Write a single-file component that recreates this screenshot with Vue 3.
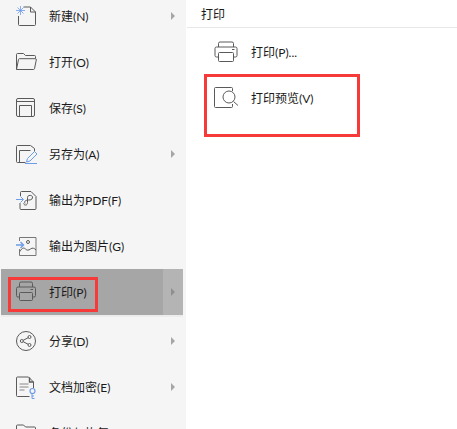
<template>
  <div class="page">
    <div class="side">
      <div class="list">
        <div class="row" v-for="item in menu" :key="item.label" :class="{ active: item.active }">
          <svg class="ico" width="30" height="30" viewBox="0 0 30 30" fill="none" stroke="#5a5a5a" stroke-width="1">
            <g v-if="item.icon == 'new'">
              <path d="M6.500 15v8.500a1 1 0 0 0 1 1h15a1 1 0 0 0 1-1V11l-5-5h-7" />
              <path d="M18.500 6v5h5" />
              <path d="M8.500 5v9M4 9.500h9M5.500 6.500l6 6M11.500 6.500l-6 6" stroke="#6d9ce8" stroke-width="0.8" />
            </g>
            <g v-else-if="item.icon == 'open'">
              <path d="M4.500 22.500v-15a1 1 0 0 1 1-1h6l2 2h9a1 1 0 0 1 1 1v2" />
              <path d="M4.500 22.500l2-10a1 1 0 0 1 1-.8h15.800a1 1 0 0 1 1 1.200l-1.800 8.800a1 1 0 0 1-1 .8z" />
            </g>
            <g v-else-if="item.icon == 'save'">
              <rect x="4.500" y="5.500" width="18" height="18" rx="1.500" />
              <path d="M4.500 8.500h18M7.500 23.500v-11h12v11" />
            </g>
            <g v-else-if="item.icon == 'saveas'">
              <path d="M13.500 23.500h-8a1 1 0 0 1-1-1v-15a1 1 0 0 1 1-1h13l4 3v3" />
              <path d="M7.500 23v-11.500h11" />
              <path d="M14.500 23l1-3.500 7-7 2.500 2.500-7 7zM13 24.500h12" stroke="#6d9ce8" />
            </g>
            <g v-else-if="item.icon == 'pdf'">
              <path d="M8.500 11V7.500a1 1 0 0 1 1-1h9.500l5 5v12a1 1 0 0 1-1 1h-14a1 1 0 0 1-1-1V18" />
              <path d="M13 18.500c-1.500-3 2-3.500 4-3.500 3 0 3.500-1.500 3.500-3 0-2-5-2.500-5 .5v5c0 3-3 3.500-4 1" />
              <path d="M4 14.500h7M8.500 11.500l3 3-3 3" stroke="#6d9ce8" />
            </g>
            <g v-else-if="item.icon == 'image'">
              <path d="M7.500 10V6.500h16.500v18H7.500V18" stroke="#777" />
              <circle cx="16" cy="11" r="1.500" />
              <path d="M8 20.500c2-4 4-4 5.500-2.500s3 1.500 5 0 3.500-1 5.500 1" />
              <path d="M4 14h7M8.500 11l3 3-3 3" stroke="#6d9ce8" stroke-width="1.400" />
            </g>
            <g v-else-if="item.icon == 'print'">
              <path d="M7.500 10V6.500a1.500 1.500 0 0 1 1.500-1.500h10a1.500 1.500 0 0 1 1.500 1.500V10" />
              <path d="M7.500 20H6A1.500 1.500 0 0 1 4.500 18.500v-7A1.500 1.500 0 0 1 6 10h16a1.500 1.500 0 0 1 1.500 1.500v7a1.500 1.500 0 0 1-1.500 1.500h-1.500" />
              <rect x="7.500" y="15.500" width="13" height="8" rx="1" />
              <path d="M18.500 12.500h2.500" />
            </g>
            <g v-else-if="item.icon == 'share'">
              <circle cx="14" cy="15" r="9.500" />
              <circle cx="9.800" cy="15" r="1.500" />
              <circle cx="17.500" cy="11" r="1.500" />
              <circle cx="17.500" cy="19" r="1.500" />
              <path d="M11.200 14.300l5-2.600M11.200 15.700l5 2.600" />
            </g>
            <g v-else-if="item.icon == 'lock'">
              <path d="M21.500 16v-6l-5-5h-11a1 1 0 0 0-1 1v17.500a1 1 0 0 0 1 1h12" />
              <path d="M17.500 5.500v4.500h4" stroke-width="1.400" />
              <path d="M7.500 12h9M7.500 15h9M7.500 18h5" stroke="#888" />
              <circle cx="20.500" cy="19" r="2.500" stroke="#6d9ce8" stroke-width="1.200" />
              <path d="M20 21.500v5h2.500M20 24h2" stroke="#6d9ce8" />
            </g>
            <g v-else>
              <path d="M4.500 25v-17a1 1 0 0 1 1-1h6l2 2h9a1 1 0 0 1 1 1v15" />
              <path d="M10 14l3-3" stroke="#6d9ce8" />
            </g>
          </svg>
          <span class="label">{{ item.label }}</span>
          <span v-if="item.arrow" class="more"><i class="arrow"></i></span>
          <div v-if="item.active" class="mark"></div>
        </div>
      </div>
    </div>
    <div class="main">
      <div class="title">打印</div>
      <div class="sub">
        <svg class="ico" width="30" height="30" viewBox="0 0 30 30" fill="none" stroke="#5a5a5a" stroke-width="1">
          <path d="M7.500 11V7.500A1.500 1.500 0 0 1 9 6h12a1.500 1.500 0 0 1 1.500 1.500V11" />
          <path d="M7.500 21H5.500A1.500 1.500 0 0 1 4 19.500v-7A1.500 1.500 0 0 1 5.500 11h19a1.500 1.500 0 0 1 1.500 1.500v7a1.500 1.500 0 0 1-1.500 1.500h-2" />
          <rect x="7.500" y="16.500" width="15" height="9" rx="1" />
          <path d="M21 13.500h2.500" />
        </svg>
        <span>打印(P)...</span>
      </div>
      <div class="sub preview">
        <svg class="ico" width="30" height="30" viewBox="0 0 30 30" fill="none" stroke="#5a5a5a" stroke-width="1">
          <path d="M21.500 22v2.500a1 1 0 0 1-1 1h-16a1 1 0 0 1-1-1V6.500a1 1 0 0 1 1-1h16a1 1 0 0 1 1 1V9" />
          <circle cx="18" cy="15" r="6" />
          <path d="M22.500 19.500l4.500 4" />
        </svg>
        <span>打印预览(V)</span>
        <div class="mark big"></div>
      </div>
    </div>
  </div>
</template>

<script setup>
const menu = [
  { label: '新建(N)', icon: 'new', arrow: true },
  { label: '打开(O)', icon: 'open' },
  { label: '保存(S)', icon: 'save' },
  { label: '另存为(A)', icon: 'saveas', arrow: true },
  { label: '输出为PDF(F)', icon: 'pdf' },
  { label: '输出为图片(G)', icon: 'image' },
  { label: '打印(P)', icon: 'print', arrow: true, active: true },
  { label: '分享(D)', icon: 'share', arrow: true },
  { label: '文档加密(E)', icon: 'lock', arrow: true },
  { label: '备份与恢复(K)', icon: 'backup' }
]
</script>

<style>
html, body {
  margin: 0;
  background: #fff;
  overflow: hidden;
}
</style>

<style scoped>
.page {
  display: flex;
  width: 457px;
  height: 429px;
  overflow: hidden;
  font-family: Lato, "Noto Sans CJK SC", sans-serif;
  font-size: 12px;
  color: #1a1a1a;
}
.side {
  width: 186px;
  height: 429px;
  background: #f5f5f5;
  overflow: hidden;
  flex-shrink: 0;
}
.list {
  margin-top: -7px;
}
.row {
  display: flex;
  align-items: center;
  height: 46px;
  position: relative;
  margin-left: 1px;
  width: 182px;
}
.row .ico {
  margin-left: 11px;
}
.label {
  margin-left: 7px;
  margin-bottom: 1px;
}
.more {
  margin-left: auto;
  width: 20px;
  align-self: stretch;
  display: flex;
  align-items: center;
  justify-content: center;
}
.arrow {
  width: 0;
  height: 0;
  border-left: 4px solid #a6a6a6;
  border-top: 4px solid transparent;
  border-bottom: 4px solid transparent;
}
.active {
  background: #a6a6a6;
  margin-bottom: 3px;
  box-shadow: 0 2px 0 #ececec;
}
.active .more {
  background: #b4b4b4;
}
.active .arrow {
  border-left-color: #8f8f8f;
}
.mark {
  position: absolute;
  left: 7px;
  top: 8px;
  width: 84px;
  height: 29px;
  border: 3px solid #f63a3a;
}
.main {
  flex: 1;
  padding-left: 1px;
}
.title {
  height: 27px;
  line-height: 29px;
  padding-left: 14px;
  border-bottom: 1px solid #e8e8e8;
}
.sub {
  display: flex;
  align-items: center;
  height: 46px;
  padding-left: 24px;
  position: relative;
}
.sub span {
  margin-left: 10px;
}
.preview span {
  margin-top: 1px;
}
.preview .big {
  left: 17px;
  top: 0;
  width: 150px;
  height: 57px;
}
</style>
